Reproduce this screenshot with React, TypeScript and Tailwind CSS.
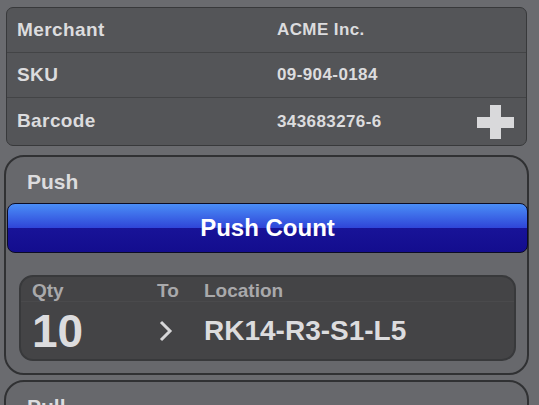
import React from "react";

const rows = [
  { label: "Merchant", value: "ACME Inc." },
  { label: "SKU", value: "09-904-0184" },
  { label: "Barcode", value: "343683276-6", add: true },
];

const PlusIcon = () => (
  <div className="relative w-[37px] h-[34px]">
    <div className="absolute left-[13px] top-0 w-[11px] h-[34px] bg-[#d9d9db]" />
    <div className="absolute left-0 top-[12px] w-[37px] h-[11px] bg-[#d9d9db]" />
  </div>
);

const Chevron = () => (
  <svg width="16" height="22" viewBox="0 0 16 22" fill="none">
    <path d="M3 2 L12 11 L3 20" stroke="#d6d6d8" strokeWidth="3" />
  </svg>
);

const App = () => {
  return (
    <div className="w-[539px] h-[405px] overflow-hidden bg-[#6a6b6f] pt-[7px] font-['Liberation_Sans',Arial,sans-serif] font-bold text-[#dcdcde]">
      <div className="ml-[6px] w-[521px] h-[139px] rounded-[7px] border border-[#38393b] bg-[#545558] overflow-hidden">
        {rows.map((r, i) => (
          <div
            key={r.label}
            className={`flex items-center h-[45px] ${i < 2 ? "border-b border-[#434446]" : "h-[47px]"}`}
          >
            <span className="w-[270px] pl-[10px] text-[19px] tracking-[0.4px]">{r.label}</span>
            <span className="flex-1 text-[17px] tracking-[0.4px]">{r.value}</span>
            {r.add && (
              <div className="mr-[12px]">
                <PlusIcon />
              </div>
            )}
          </div>
        ))}
      </div>

      <div className="mt-[9px] ml-[4px] w-[525px] rounded-[20px] border-2 border-[#303133] bg-[#67686c] pb-[12px]">
        <div className="pl-[21px] pt-[9px] h-[46px] text-[21px]">Push</div>
        <button className="ml-px w-[521px] h-[50px] rounded-[8px] border border-[#0c0c24] bg-[linear-gradient(to_bottom,#4a8ef7_0%,#2f45d8_50%,#181398_50%,#130d8e_100%)] text-white text-[24px]">
          Push Count
        </button>
        <div className="mt-[22px] ml-[13px] w-[497px] h-[86px] rounded-[14px] border-2 border-[#38393b] bg-[#444446]">
          <div className="grid grid-cols-[125px_47px_1fr] pl-[11px] h-[25px] items-center border-b border-[#4a4a4c] text-[19px] text-[#a9a9ab]">
            <span>Qty</span>
            <span>To</span>
            <span>Location</span>
          </div>
          <div className="grid grid-cols-[125px_47px_1fr] pl-[11px] h-[57px] items-center">
            <span className="text-[46px] leading-none">10</span>
            <span className="pl-px">
              <Chevron />
            </span>
            <span className="text-[28px] leading-none">RK14-R3-S1-L5</span>
          </div>
        </div>
      </div>

      <div className="mt-[5px] ml-[4px] w-[525px] h-[80px] rounded-[20px] border-2 border-[#303133] bg-[#67686c]">
        <div className="pl-[21px] pt-[9px] text-[21px]">Pull</div>
      </div>
    </div>
  );
};

export default App;
